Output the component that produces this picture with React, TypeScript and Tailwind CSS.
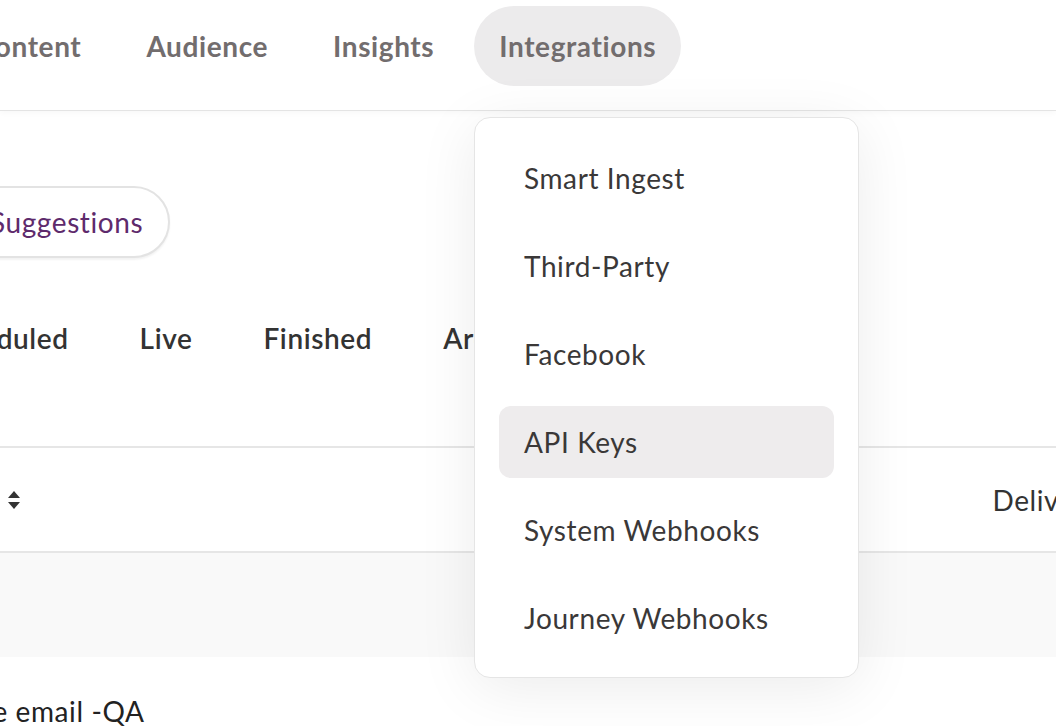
import React from "react";

const navItems = ["Content", "Audience", "Insights", "Integrations"];
const tabs = ["Scheduled", "Live", "Finished", "Archived"];
const menuItems = [
  "Smart Ingest",
  "Third-Party",
  "Facebook",
  "API Keys",
  "System Webhooks",
  "Journey Webhooks",
];

function SortIcon() {
  return (
    <svg width="14" height="22" viewBox="0 0 14 22" className="text-[#333]">
      <path d="M7 2 L13 9 L1 9 Z" fill="currentColor" />
      <path d="M1 13 L13 13 L7 20 Z" fill="currentColor" />
    </svg>
  );
}

export default function App() {
  return (
    <div className="relative h-[726px] w-[1056px] overflow-hidden bg-white font-['Lato',sans-serif] tracking-[0.6px]">
      {/* top nav */}
      <header className="flex h-[111px] items-start border-b border-[#e4e4e4] pt-[6px] shadow-[0_2px_6px_rgba(0,0,0,0.03)]">
        <nav className="ml-[-49px] flex gap-[15px]">
          {navItems.map((n) => (
            <div
              key={n}
              className={
                "flex h-[80px] items-center rounded-full px-[25px] text-[28px] font-bold text-[#726d6e] " +
                (n === "Integrations" ? "bg-[#ecebec]" : "")
              }
            >
              {n}
            </div>
          ))}
        </nav>
      </header>

      {/* suggestions button */}
      <div className="flex pt-[75px]">
        <button className="ml-[-52px] flex h-[72px] items-center rounded-full border-2 border-[#e3e3e3] bg-white pl-[40px] pr-[25px] text-[28px] text-[#5e2a6c] shadow-[0_2px_2px_rgba(0,0,0,0.05)]">
          Suggestions
        </button>
      </div>

      {/* tabs */}
      <div className="ml-[-65px] mt-[60px] flex h-[40px] items-center gap-[71px] text-[28px] font-semibold text-[#333]">
        {tabs.map((t) => (
          <span key={t}>{t}</span>
        ))}
      </div>

      {/* table */}
      <div className="mt-[88px] border-t-2 border-[#e6e6e6]">
        <div className="flex h-[105px] items-center border-b-2 border-[#e6e6e6] pl-[7px]">
          <SortIcon />
          <span className="ml-auto mr-[-60px] text-[28px] text-[#333]">Delivered</span>
        </div>
        <div className="h-[104px] bg-[#f9f9f9]" />
        <div className="ml-[-112px] pt-[33px] text-[28px] text-[#222]">Welcome email -QA</div>
      </div>

      {/* dropdown menu */}
      <div className="absolute left-[474px] top-[117px] flex h-[561px] w-[385px] flex-col rounded-[16px] border border-[#e5e5e5] bg-white px-[24px] pt-[24px] shadow-[0_10px_60px_rgba(0,0,0,0.08)]">
        {menuItems.map((m) => (
          <div
            key={m}
            className={
              "mb-[16px] flex h-[72px] shrink-0 items-center rounded-[12px] px-[25px] text-[28px] text-[#3a3838] " +
              (m === "API Keys" ? "bg-[#eeeced]" : "")
            }
          >
            {m}
          </div>
        ))}
      </div>
    </div>
  );
}
